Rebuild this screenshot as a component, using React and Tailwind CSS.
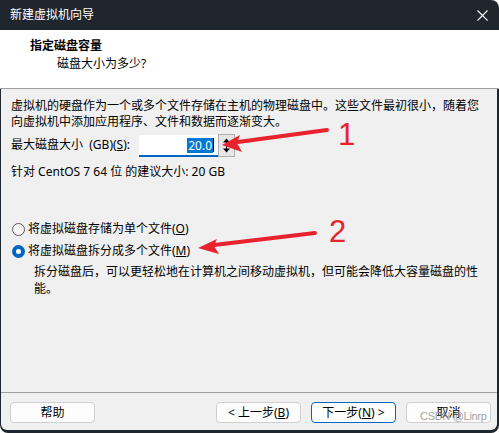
import React from "react";

const F = { fontFamily: '"Noto Sans", "Noto Sans CJK SC", sans-serif' };

function Radio({ checked }) {
  return checked ? (
    <span className="w-[13px] h-[13px] rounded-full bg-[#0067c0] flex items-center justify-center shrink-0">
      <span className="w-[5px] h-[5px] rounded-full bg-white" />
    </span>
  ) : (
    <span className="w-[13px] h-[13px] rounded-full border border-[#5a5a5a] bg-[#f6f6f6] shrink-0" />
  );
}

function Btn({ children, primary }) {
  return (
    <div
      className={
        "h-[21px] w-[85px] rounded-[4px] flex items-center justify-center text-[12px] text-black bg-[#fdfdfd] border " +
        (primary ? "border-[#0067c0]" : "border-[#d0d0d0]")
      }
    >
      {children}
    </div>
  );
}

export default function App() {
  return (
    <div className="w-[499px] h-[433px] bg-white overflow-hidden relative" style={F}>
      <div className="w-full h-full bg-[#1f262d] rounded-tr-[8px] rounded-b-[8px] flex flex-col">
        {/* title bar */}
        <div className="h-[30px] shrink-0 flex items-center justify-between pl-[10px] pr-[11px]">
          <span className="text-white text-[12px] leading-none">新建虚拟机向导</span>
          <svg width="11" height="11" viewBox="0 0 11 11">
            <path d="M0.5 0.5 L10.5 10.5 M10.5 0.5 L0.5 10.5" stroke="white" strokeWidth="1.1" fill="none" />
          </svg>
        </div>
        {/* header */}
        <div className="h-[59px] shrink-0 bg-white border-b border-[#a0a0a0] text-black">
          <div className="pl-[30px] pt-[8px] text-[12px] leading-[16px] font-bold">指定磁盘容量</div>
          <div className="pl-[57px] pt-[2px] text-[12px] leading-[16px]">磁盘大小为多少?</div>
        </div>
        {/* body */}
        <div className="flex-1 flex flex-col ml-px mr-[2px] mb-[3px] bg-[#f0f0f0] rounded-b-[6px]">
          <div className="flex-1 flex flex-col pl-[10px] pt-[9px] text-[12px] text-black">
            <div className="leading-[16px] whitespace-nowrap">虚拟机的硬盘作为一个或多个文件存储在主机的物理磁盘中。这些文件最初很小，随着您</div>
            <div className="leading-[16px] whitespace-nowrap">向虚拟机中添加应用程序、文件和数据而逐渐变大。</div>
            <div className="mt-[3px] h-[24px] flex items-center">
              <span className="w-[128px] whitespace-nowrap">
                最大磁盘大小&nbsp; (GB)(<span className="underline">S</span>):
              </span>
              <div className="w-[79px] h-[22px] mt-[2px] bg-white border-b-2 border-[#0067c0] flex items-center justify-end pr-[4px]">
                <span className="bg-[#0078d7] text-white leading-[15px] px-px">20.0</span>
                <span className="w-px h-[14px] bg-black" />
              </div>
              <div className="w-[17px] h-[23px] border border-[#adadad] bg-[#e6e6e6] flex items-center justify-center">
                <svg width="7" height="15" viewBox="0 0 7 15">
                  <path d="M3.5 0.5 L7 4.5 L0 4.5 Z M3.5 14.5 L7 10.5 L0 10.5 Z" fill="black" />
                  <path d="M3.5 4 L3.5 11" stroke="black" strokeWidth="1" />
                </svg>
              </div>
            </div>
            <div className="mt-[7px] leading-[16px] whitespace-nowrap">针对 CentOS 7 64 位 的建议大小: 20 GB</div>
            <div className="mt-[39px] h-[20px] flex items-center gap-[3px] pl-px">
              <Radio />
              <span className="whitespace-nowrap">
                将虚拟磁盘存储为单个文件(<span className="underline">O</span>)
              </span>
            </div>
            <div className="mt-[2px] h-[20px] flex items-center gap-[3px] pl-px">
              <Radio checked />
              <span className="whitespace-nowrap">
                将虚拟磁盘拆分成多个文件(<span className="underline">M</span>)
              </span>
            </div>
            <div className="mt-[2px] pl-[23px] leading-[17px] whitespace-nowrap">
              拆分磁盘后，可以更轻松地在计算机之间移动虚拟机，但可能会降低大容量磁盘的性
            </div>
            <div className="pl-[23px] leading-[17px]">能。</div>
          </div>
          {/* footer */}
          <div className="h-[38px] shrink-0 border-t border-[#a0a0a0] flex items-start pt-[9px] pl-[9px] pr-[6px]">
            <Btn>帮助</Btn>
            <div className="flex-1" />
            <div className="flex gap-[10px] relative">
              <Btn>
                &lt; 上一步(<span className="underline">B</span>)
              </Btn>
              <Btn primary>
                下一步(<span className="underline">N</span>) &gt;
              </Btn>
              <Btn>取消</Btn>
              <span
                className="absolute left-[204px] top-[9px] text-[11px] leading-none tracking-[-0.3px] text-[#9a9a9a] opacity-90 whitespace-nowrap"
                style={{ fontFamily: '"Liberation Sans", sans-serif' }}
              >
                CSDN @Linrp
              </span>
            </div>
          </div>
        </div>
      </div>

      {/* annotations */}
      <svg className="absolute left-0 top-0 pointer-events-none" width="499" height="433">
        <path d="M327 130 L238 142" stroke="#e8232d" strokeWidth="4" strokeLinecap="round" />
        <path d="M222 145 L240 135 L237 143 L242 152 Z" fill="#e8232d" />
        <path d="M315 233 L214 245" stroke="#e8232d" strokeWidth="4" strokeLinecap="round" />
        <path d="M198 248 L217 239 L214 246 L219 254 Z" fill="#e8232d" />
      </svg>
      <span
        className="absolute left-[338px] top-[119px] text-[31px] leading-none text-[#e8232d]"
        style={{ fontFamily: '"Liberation Sans", sans-serif' }}
      >
        1
      </span>
      <span
        className="absolute left-[329px] top-[216px] text-[31px] leading-none text-[#e8232d]"
        style={{ fontFamily: '"Liberation Sans", sans-serif' }}
      >
        2
      </span>
    </div>
  );
}
